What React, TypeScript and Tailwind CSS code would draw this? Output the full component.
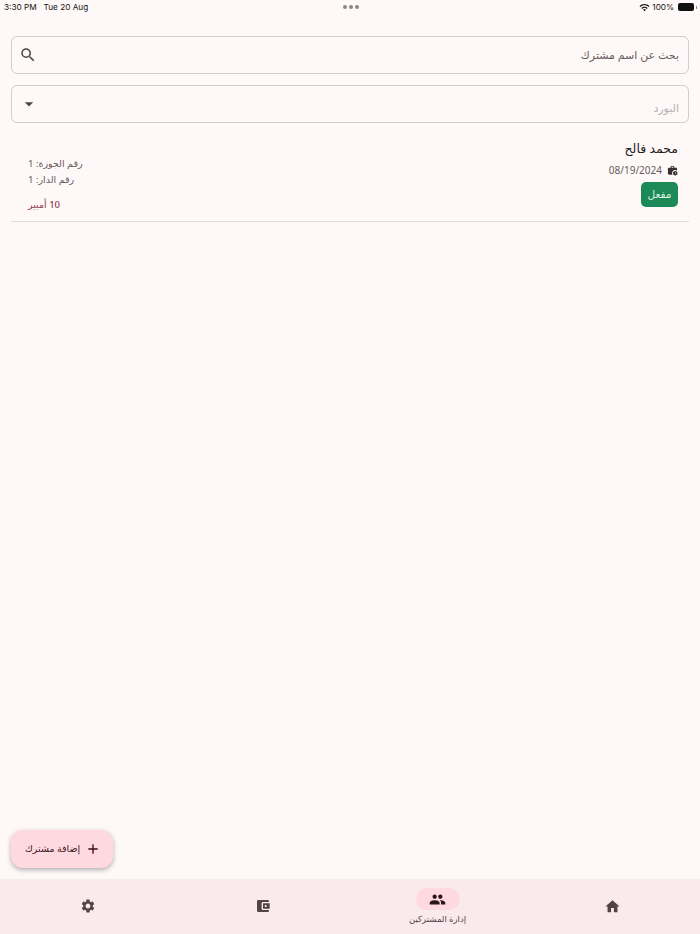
import { MdSearch, MdArrowDropDown, MdSettings, MdAccountBalanceWallet, MdPeople, MdHome, MdAdd, MdWorkHistory, MdWifi } from 'react-icons/md';

function StatusBar() {
  return (
    <div className="relative h-[14px] flex items-center justify-between pl-[4px] pr-[3px] text-[8.2px] leading-none text-[#111] font-['Inter',sans-serif]">
      <div className="flex gap-[7px]">
        <span>3:30 PM</span>
        <span>Tue 20 Aug</span>
      </div>
      <div className="absolute left-[343px] top-[5px] flex gap-[2px]">
        <span className="w-[4px] h-[4px] rounded-full bg-[#8a8a8a]" />
        <span className="w-[4px] h-[4px] rounded-full bg-[#8a8a8a]" />
        <span className="w-[4px] h-[4px] rounded-full bg-[#8a8a8a]" />
      </div>
      <div className="flex items-center gap-[2px]">
        <MdWifi size={11} className="text-[#111]" />
        <span>100%</span>
        <span className="ml-[2px] w-[16px] h-[8px] rounded-[2px] bg-[#111]" />
        <span className="w-[1px] h-[3px] bg-[#888]" />
      </div>
    </div>
  );
}

function NavItem({ children, label, active }: { children: React.ReactNode; label?: string; active?: boolean }) {
  return (
    <div className="flex-1 flex flex-col items-center">
      <div className={`w-[44px] h-[22px] rounded-full flex items-center justify-center ${active ? 'bg-[#ffd9e0]' : ''}`}>
        {children}
      </div>
      {label && <span className="mt-[3px] text-[8.5px] leading-[12px] text-[#524346]">{label}</span>}
    </div>
  );
}

export default function App() {
  return (
    <div className="h-[934px] flex flex-col bg-[#fff8f8] font-['Noto_Sans','DejaVu_Sans',sans-serif] overflow-hidden">
      <StatusBar />

      <div className="flex-1 flex flex-col px-[11px] pt-[22px]">
        {/* Search */}
        <div dir="rtl" className="h-[38px] flex items-center justify-between pr-[9px] pl-[7px] border border-[#d7c9cc] rounded-[6px]">
          <span className="text-[11px] text-[#665a5d]">بحث عن اسم مشترك</span>
          <MdSearch size={18} className="text-[#524346]" />
        </div>

        {/* Board select */}
        <div dir="rtl" className="mt-[11px] h-[38px] flex items-center justify-between pr-[9px] pl-[7px] border border-[#d7c9cc] rounded-[6px]">
          <span className="mt-[9px] text-[11px] text-[#b9adb0]">البورد</span>
          <MdArrowDropDown size={20} className="text-[#524346]" />
        </div>

        {/* Subscriber */}
        <div className="mt-[12px] h-[87px] flex justify-between px-[11px] border-b border-[#e3d8da]">
          <div dir="rtl" className="flex flex-col items-end pt-[21px] pl-[6px] text-[9.5px] leading-[16px] text-[#665a5d]">
            <span>رقم الجوزة: 1</span>
            <span>رقم الدار: 1</span>
            <span className="mt-[9px] text-[#8e3a50] font-medium">10 أمبير</span>
          </div>
          <div className="flex flex-col items-end pt-[5px]">
            <span dir="rtl" className="text-[12.5px] leading-[18px] text-[#22191b]">محمد فالح</span>
            <div className="mt-[5px] flex items-center gap-[5px] text-[10px] leading-[14px] text-[#665a5d]">
              <span>08/19/2024</span>
              <MdWorkHistory size={11} className="text-[#3a2e31]" />
            </div>
            <span className="mt-[5px] w-[37px] h-[25px] rounded-[5px] bg-[#1b8a57] flex items-center justify-center text-[10.5px] text-[#d9efe3]">مفعل</span>
          </div>
        </div>

        {/* FAB */}
        <div className="mt-auto mb-[11px] w-[102px] h-[38px] flex items-center justify-between pl-[14px] pr-[12px] rounded-[12px] bg-[#ffd9e0] shadow-[0_2px_5px_rgba(0,0,0,0.3)]">
          <span dir="rtl" className="text-[9.5px] text-[#3f1a26]">إضافة مشترك</span>
          <MdAdd size={16} className="text-[#3f0a1c]" />
        </div>
      </div>

      {/* Bottom nav */}
      <div className="h-[55px] flex bg-[#faeaed] pt-[9px]">
        <NavItem><MdSettings size={16} className="mt-[14px] text-[#524346]" /></NavItem>
        <NavItem><MdAccountBalanceWallet size={16} className="mt-[14px] text-[#524346]" /></NavItem>
        <NavItem active label="إدارة المشتركين"><MdPeople size={17} className="text-[#2b151c]" /></NavItem>
        <NavItem><MdHome size={17} className="mt-[14px] text-[#524346]" /></NavItem>
      </div>
    </div>
  );
}
